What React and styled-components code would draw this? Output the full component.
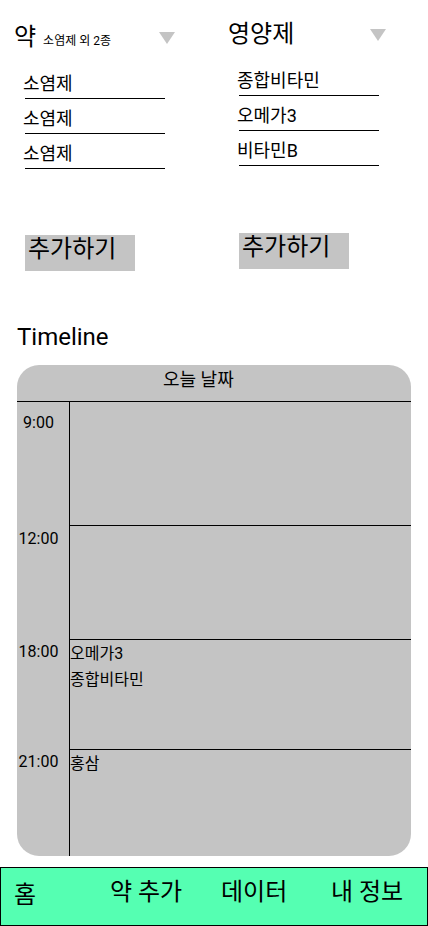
import React from 'react';
import styled, { createGlobalStyle } from 'styled-components';

const Gray = '#c4c4c4';

const GlobalStyle = createGlobalStyle`
  body {
    margin: 0;
    background: #fff;
    font-family: Roboto, 'Noto Sans CJK KR', sans-serif;
    color: #000;
  }
`;

const Page = styled.div`
  width: 428px;
  display: flex;
  flex-direction: column;
`;

const Pickers = styled.section`
  display: grid;
  grid-template-columns: 214px 214px;
`;

const Column = styled.div`
  padding-left: 14px;
  padding-top: ${p => p.top}px;
  display: flex;
  flex-direction: column;
`;

const Header = styled.div`
  width: ${p => p.width}px;
  display: flex;
  align-items: baseline;
  height: 28px;
`;

const Title = styled.span`
  font-size: 24px;
  line-height: 28px;
`;

const Summary = styled.span`
  font-size: 12px;
  margin-left: 7px;
`;

const Arrow = styled.span`
  margin-left: auto;
  align-self: flex-start;
  margin-top: 9px;
  width: 0;
  height: 0;
  border-left: 8px solid transparent;
  border-right: 8px solid transparent;
  border-top: 12px solid ${Gray};
`;

const List = styled.ul`
  list-style: none;
  margin: 13px 0 0 11px;
  padding: 0;
`;

const Item = styled.li`
  width: 140px;
  height: 35px;
  box-sizing: border-box;
  border-bottom: 1px solid #000;
  display: flex;
  align-items: flex-end;
  padding-bottom: 3px;
  font-size: 18px;
  line-height: 22px;
  text-indent: -2px;
`;

const AddButton = styled.button`
  margin: ${p => p.gap}px 0 0 11px;
  width: 110px;
  height: 36px;
  padding: 0 3px;
  border: none;
  border-radius: 0;
  background: ${Gray};
  font-family: inherit;
  font-size: 24px;
  line-height: 28px;
  text-align: left;
  align-self: flex-start;
  display: flex;
  align-items: flex-start;
  color: #000;
`;

const SectionTitle = styled.h2`
  margin: 52px 0 0 17px;
  font-size: 24px;
  font-weight: 400;
  line-height: 28px;
`;

const Timeline = styled.div`
  margin: 14px 0 0 17px;
  width: 394px;
  height: 491px;
  background: ${Gray};
  border-radius: 22px;
  overflow: hidden;
  display: flex;
  flex-direction: column;
`;

const DateBar = styled.div`
  height: 37px;
  box-sizing: border-box;
  border-bottom: 1px solid #000;
  padding-left: 146px;
  font-size: 18px;
  line-height: 30px;
`;

const Row = styled.div`
  display: flex;
  height: ${p => p.h}px;
  flex: ${p => (p.last ? 1 : 'none')};
`;

const Time = styled.div`
  width: 43px;
  padding-right: 9px;
  padding-top: ${p => p.pad}px;
  text-align: center;
  font-size: 16px;
  line-height: 20px;
`;

const Slot = styled.div`
  flex: 1;
  border-left: 1px solid #000;
  border-top: ${p => (p.first ? 'none' : '1px solid #000')};
  padding-top: 1px;
  font-size: 16px;
  line-height: 26px;
`;

const Entry = styled.div``;

const Nav = styled.nav`
  margin-top: 11px;
  height: 59px;
  box-sizing: border-box;
  border: 1px solid #000;
  background: #55ffb2;
  display: grid;
  grid-template-columns: 96px 111px 110px 1fr;
  padding: 10px 0 0 13px;
`;

const NavItem = styled.span`
  font-size: 24px;
  line-height: 28px;
  white-space: nowrap;
  padding-top: ${p => p.drop || 0}px;
`;

const rows = [
  { time: '9:00', h: 123, pad: 11, items: [] },
  { time: '12:00', h: 114, pad: 4, items: [] },
  { time: '18:00', h: 110, pad: 3, items: ['오메가3', '종합비타민'] },
  { time: '21:00', h: 107, pad: 3, items: ['홍삼'] }
];

const App = () => {
  return (
    <Page>
      <GlobalStyle />
      <Pickers>
        <Column top={23}>
          <Header width={161}>
            <Title>약</Title>
            <Summary>소염제 외 2종</Summary>
            <Arrow />
          </Header>
          <List>
            <Item>소염제</Item>
            <Item>소염제</Item>
            <Item>소염제</Item>
          </List>
          <AddButton gap={66}>추가하기</AddButton>
        </Column>
        <Column top={20}>
          <Header width={158}>
            <Title>영양제</Title>
            <Arrow />
          </Header>
          <List>
            <Item>종합비타민</Item>
            <Item>오메가3</Item>
            <Item>비타민B</Item>
          </List>
          <AddButton gap={67}>추가하기</AddButton>
        </Column>
      </Pickers>

      <SectionTitle>Timeline</SectionTitle>
      <Timeline>
        <DateBar>오늘 날짜</DateBar>
        {rows.map((r, i) => (
          <Row key={r.time} h={r.h} last={i === rows.length - 1}>
            <Time pad={r.pad}>{r.time}</Time>
            <Slot first={i === 0}>
              {r.items.map(name => (
                <Entry key={name}>{name}</Entry>
              ))}
            </Slot>
          </Row>
        ))}
      </Timeline>

      <Nav>
        <NavItem drop={3}>홈</NavItem>
        <NavItem>약 추가</NavItem>
        <NavItem>데이터</NavItem>
        <NavItem>내 정보</NavItem>
      </Nav>
    </Page>
  );
};

export default App;
